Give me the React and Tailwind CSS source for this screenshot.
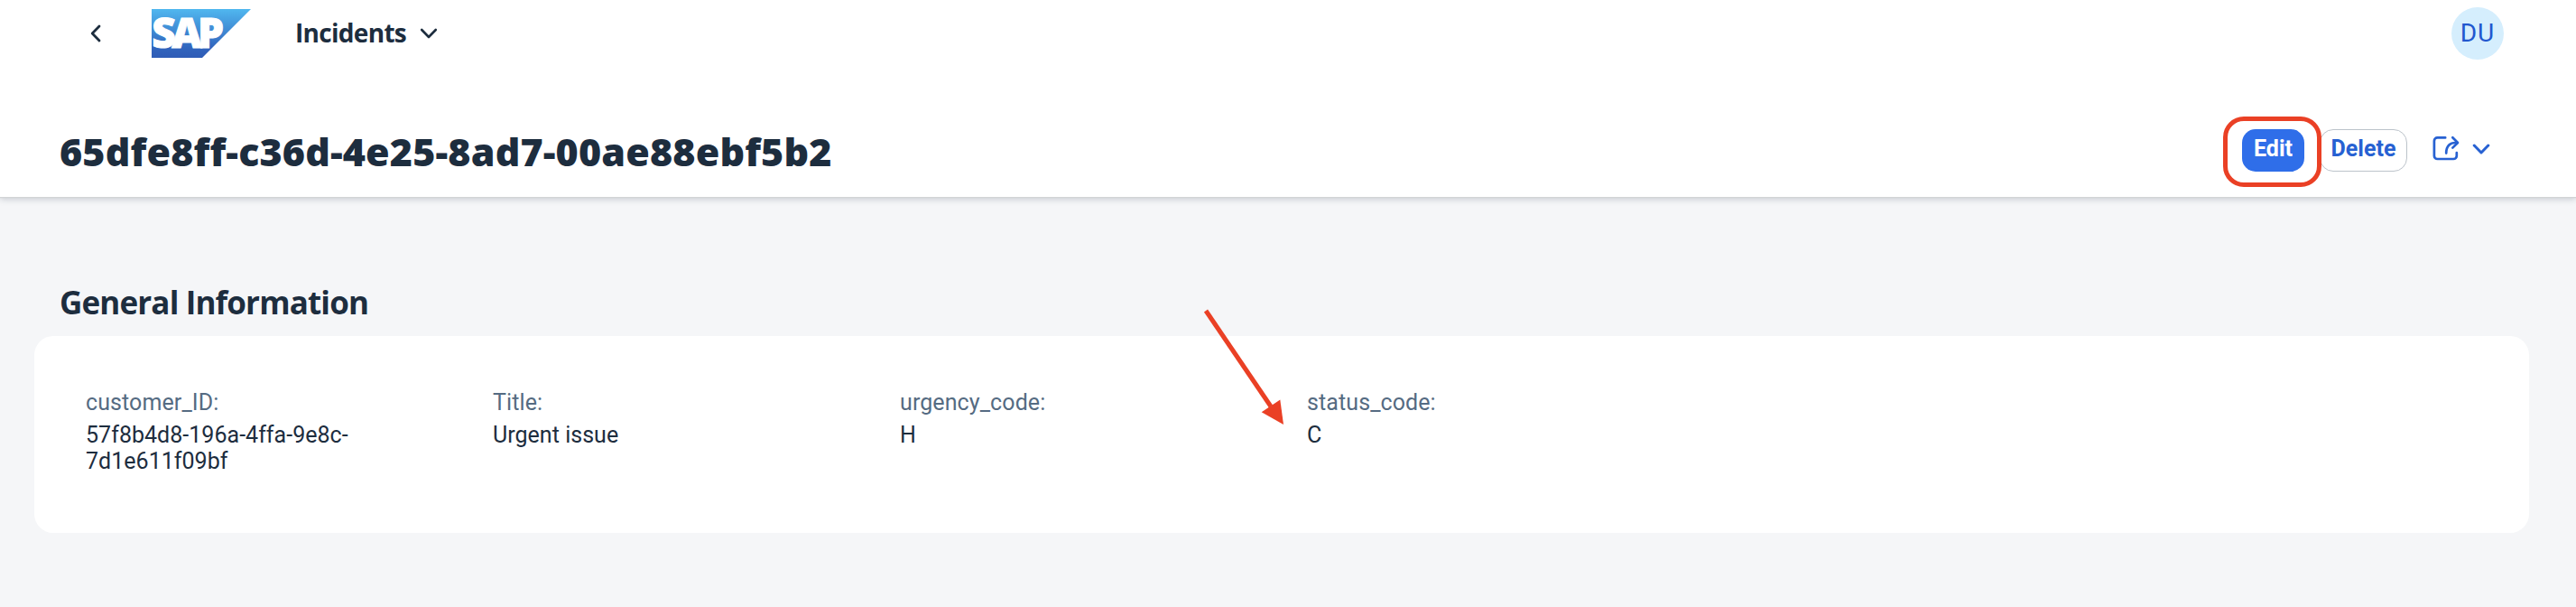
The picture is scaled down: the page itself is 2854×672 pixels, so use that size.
function BackIcon() {
  return (
    <svg className="h-5 w-3" viewBox="0 0 12 20" fill="none" stroke="#1d2d3e" strokeWidth="2.8" strokeLinecap="round" strokeLinejoin="round">
      <path d="M10 2 L2.2 10 L10 18" />
    </svg>
  );
}

function ChevronDown({ className, strokeWidth }) {
  return (
    <svg className={className} viewBox="0 0 20 12" fill="none" stroke="currentColor" strokeWidth={strokeWidth} strokeLinecap="round" strokeLinejoin="round">
      <path d="M2.2 2 L10 10 L17.8 2" />
    </svg>
  );
}

function SapLogo() {
  return (
    <svg className="h-[54px] w-[110px] overflow-visible" viewBox="0 0 110 54">
      <defs>
        <linearGradient id="sap" x1="0" y1="0" x2="0" y2="1">
          <stop offset="0" stopColor="#50b7ef" />
          <stop offset="0.5" stopColor="#3d84d0" />
          <stop offset="0.8" stopColor="#3164bd" />
          <stop offset="1" stopColor="#2f5cb6" />
        </linearGradient>
      </defs>
      <path d="M0 0H110L56 54H0Z" fill="url(#sap)" />
      <text x="0.2" y="43.2" textLength="80" lengthAdjust="spacing" fill="#fff" stroke="#fff" strokeWidth="1" fontFamily="Open Sans, sans-serif" fontWeight="800" fontSize="46">SAP</text>
    </svg>
  );
}

function ShareIcon() {
  return (
    <svg className="h-7 w-[30px]" viewBox="0 0 30 28" fill="none" stroke="#2761d2" strokeWidth="2.7" strokeLinecap="round" strokeLinejoin="round">
      <path d="M14.2 2.4H5.5A3.6 3.6 0 0 0 1.9 6V22.4A3.6 3.6 0 0 0 5.5 26H23.2A3.6 3.6 0 0 0 26.8 22.4V19.2" />
      <path d="M22.3 2.2L28 8L22.3 13.6" />
      <path d="M27.4 8H25.5C19.5 8 15.2 11.6 15.2 19.6" />
    </svg>
  );
}

const fields = [
  { label: "customer_ID:", value: "57f8b4d8-196a-4ffa-9e8c-7d1e611f09bf" },
  { label: "Title:", value: "Urgent issue" },
  { label: "urgency_code:", value: "H" },
  { label: "status_code:", value: "C" },
];

export default function App() {
  return (
    <div className="relative h-[672px] w-[2854px] overflow-hidden bg-[#f5f6f8] font-['Roboto',sans-serif] text-[#1d2d3e]">
      <header className="relative h-[218px] bg-white shadow-[0_1px_1px_#d2d4d6,0_2px_7px_rgba(34,53,72,0.25)]">
        <div className="flex h-[74px] items-center pr-20 pl-[100px]">
          <BackIcon />
          <div className="ml-14">
            <SapLogo />
          </div>
          <div className="ml-[49px] flex items-center gap-[15px]">
            <span className="pb-0.5 font-['Open_Sans',sans-serif] text-[28px] leading-[38px] font-bold tracking-[-0.7px]">Incidents</span>
            <ChevronDown className="h-3 w-5" strokeWidth="2.6" />
          </div>
          <div className="ml-auto flex size-[58px] items-center justify-center rounded-full bg-[#d5eefd] text-[28px] tracking-[1px] text-[#2157cf]">DU</div>
        </div>
        <div className="flex h-[144px] items-start justify-between pr-[95px] pl-[66px]">
          <h1 className="pt-[65px] font-['Open_Sans',sans-serif] text-[43px] leading-[58px] font-extrabold tracking-[0.15px]">65dfe8ff-c36d-4e25-8ad7-00ae88ebf5b2</h1>
          <div className="flex items-center pt-[69px]">
            <button className="h-[47px] w-[69px] rounded-[15px] bg-[#2f6ee9] pb-1 text-[25px] font-bold text-white">Edit</button>
            <button className="ml-[17px] h-[47px] w-[97px] rounded-[15px] border border-[#bcc3ca] bg-white pb-1 text-[25px] font-bold text-[#2761d2]">Delete</button>
            <div className="ml-7 flex items-center gap-[14px] pb-[5px] text-[#2761d2]">
              <ShareIcon />
              <ChevronDown className="mt-0.5 h-3 w-5" strokeWidth="3" />
            </div>
          </div>
        </div>
      </header>

      <main className="pt-[92px] pr-[52px] pl-[38px]">
        <h2 className="pl-[28px] font-['Open_Sans',sans-serif] text-[35px] leading-[50px] font-bold tracking-[-0.85px]">General Information</h2>
        <section className="mt-3 h-[218px] rounded-[21px] bg-white pt-[59px] pl-[57px]">
          <dl className="flex">
            {fields.map((f) => (
              <div key={f.label} className="w-[451px] text-[25px]">
                <dt className="leading-[30px] tracking-[0.1px] text-[#556b82]">{f.label}</dt>
                <dd className="mt-[7px] w-[310px] leading-[28.7px] tracking-[0.03px]">{f.value}</dd>
              </div>
            ))}
          </dl>
        </section>
      </main>

      <div className="absolute top-[129px] left-[2463px] h-[78px] w-[109px] rounded-[23px] border-[5px] border-[#ea4025]" />
      <svg className="absolute top-[340px] left-[1330px] h-[134px] w-[96px]" viewBox="0 0 96 134" fill="#ea4025">
        <path d="M6 4L78 110" stroke="#ea4025" strokeWidth="5" />
        <path d="M88.3 102.5L92 130L67.7 116.2Z" />
      </svg>
    </div>
  );
}
